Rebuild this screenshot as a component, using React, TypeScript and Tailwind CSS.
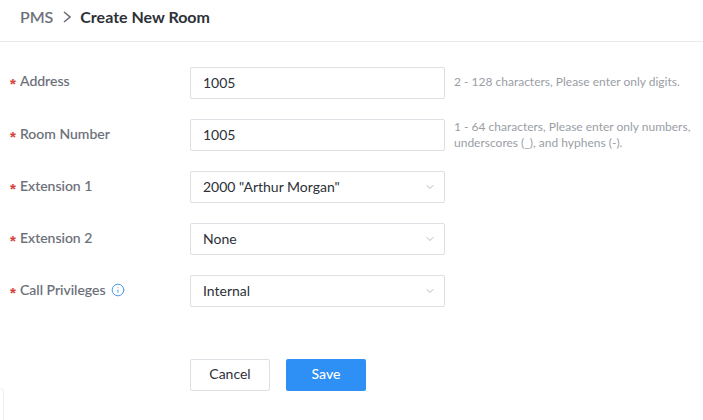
import { Info, ChevronDown } from 'lucide-react';

const font = 'font-[Lato,sans-serif]';

type RowProps = {
  label: string;
  value: string;
  select?: boolean;
  info?: boolean;
  help?: string[];
};

function Row({ label, value, select, info, help }: RowProps) {
  return (
    <div className="flex items-start h-8">
      <div className={`w-[190px] flex items-center pl-[10px] text-[14px] font-medium text-[#6b7078] [-webkit-text-stroke:0.1px_#6b7078] ${label === 'Address' ? 'h-[26px]' : 'h-[28px]'}`}>
        <span className="w-[10px] font-['Liberation_Sans'] text-[#e8402f] text-[15px] font-bold leading-none mt-[6px]">*</span>
        <span>{label}</span>
        {info && <Info size={14} strokeWidth={1.6} className="ml-[5px] mt-[2px] text-[#3f94ee]" />}
      </div>
      <div className="w-[255px] h-8 flex items-center justify-between pl-[12px] pr-[8px] pb-[2px] border border-[#dcdfe3] rounded-[2px] bg-white text-[14px] text-[#2d3138]">
        <span>{value}</span>
        {select && <ChevronDown size={12} strokeWidth={1.6} className="text-[#a0a5ab] mt-[1px]" />}
      </div>
      {help && (
        <div className={`ml-[9px] text-[12px] leading-[16px] text-[#9a9ea5] ${help.length > 1 ? 'pt-0' : 'pt-[7px]'}`}>
          {help.map((line) => (
            <div key={line}>{line}</div>
          ))}
        </div>
      )}
    </div>
  );
}

export default function App() {
  return (
    <div className={`${font} relative w-[703px] h-[420px] overflow-hidden bg-white`}>
      {/* Header */}
      <div className="h-[42px] flex items-center pl-[20px] pb-[7px] border-b border-[#e9eaec]">
        <span className="text-[16px] font-medium text-[#6b7078] [-webkit-text-stroke:0.15px_#6b7078]">PMS</span>
        <svg width="8" height="12" viewBox="0 0 8 12" className="ml-[10px] mr-[9px] text-[#6b7078]" fill="none" stroke="currentColor" strokeWidth="1.6">
          <path d="M1 1l6 5-6 5" />
        </svg>
        <span className="text-[16px] font-bold text-[#2d3138]">Create New Room</span>
      </div>

      {/* Form */}
      <div className="pt-[25px] flex flex-col gap-[20px]">
        <Row label="Address" value="1005" help={['2 - 128 characters, Please enter only digits.']} />
        <Row
          label="Room Number"
          value="1005"
          help={['1 - 64 characters, Please enter only numbers,', 'underscores (_), and hyphens (-).']}
        />
        <Row label="Extension 1" value={'2000 "Arthur Morgan"'} select />
        <Row label="Extension 2" value="None" select />
        <Row label="Call Privileges" value="Internal" select info />
      </div>

      {/* Actions */}
      <div className="pl-[190px] pt-[52px] flex gap-[16px]">
        <button className="w-[80px] h-8 pb-[3px] border border-[#dcdfe3] rounded-[2px] bg-white text-[14px] text-[#2d3138]">Cancel</button>
        <button className="w-[80px] h-8 pb-[3px] rounded-[2px] bg-[#2e8ff5] text-[14px] font-medium text-white">Save</button>
      </div>

      <div className="absolute left-[-8px] top-[388px] w-[12px] h-[40px] border border-[#eceef0] rounded-[4px]" />
    </div>
  );
}
